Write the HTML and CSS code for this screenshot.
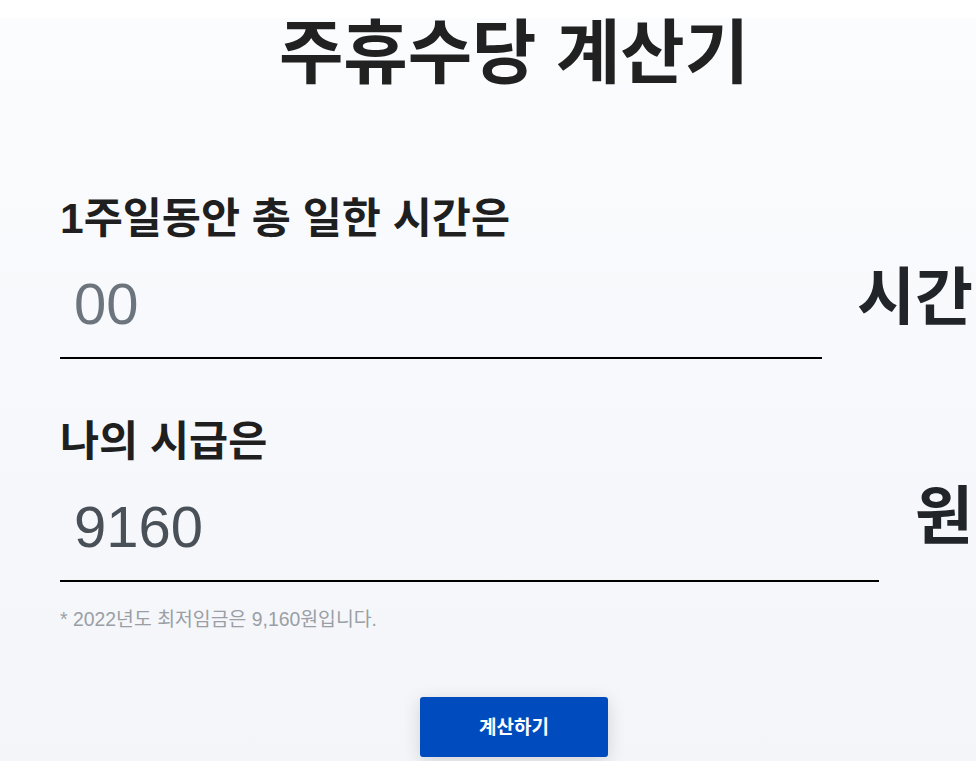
FILE: index.html
```html
<!DOCTYPE html>
<html lang="ko">
<head>
<meta charset="utf-8">
<title>주휴수당 계산기</title>
<link rel="stylesheet" href="styles.css">
</head>
<body>
<main class="page">
  <h1 class="title">주휴수당 계산기</h1>
  <form class="calc">
    <div class="field">
      <label class="field-label" for="hours">1주일동안 총 일한 시간은</label>
      <div class="input-row">
        <input id="hours" class="field-input" type="text" placeholder="00">
        <span class="unit">시간</span>
      </div>
    </div>
    <div class="field field-second">
      <label class="field-label" for="wage">나의 시급은</label>
      <div class="input-row">
        <input id="wage" class="field-input" type="text" value="9160">
        <span class="unit unit-won">원</span>
      </div>
    </div>
    <p class="note">* 2022년도 최저임금은 9,160원입니다.</p>
    <button type="button" class="submit">계산하기</button>
  </form>
</main>
</body>
</html>
```

FILE: styles.css
```css
html, body {
  margin: 0;
  padding: 0;
  background: #ffffff;
}

body {
  font-family: "Liberation Sans", "Noto Sans CJK KR", sans-serif;
  color: #212529;
}

.page {
  margin-top: 18px;
  min-height: 743px;
  box-sizing: border-box;
  padding: 0 8px 0 60px;
  background: linear-gradient(180deg, #fbfcfe 0%, #f3f5f9 100%);
  display: flex;
  flex-direction: column;
}

.title {
  margin: 0;
  font-size: 70px;
  line-height: 72px;
  font-weight: 700;
  text-align: center;
  color: #212121;
}

.calc {
  margin-top: 105px;
  display: flex;
  flex-direction: column;
}

.field {
  display: flex;
  flex-direction: column;
}

.field-second {
  margin-top: 59px;
}

.field-label {
  font-size: 42.5px;
  line-height: 48px;
  font-weight: 700;
  color: #1f1f1f;
  margin-bottom: 6px;
}

.input-row {
  display: flex;
  align-items: center;
}

.field-input {
  flex: 1;
  min-width: 0;
  height: 110px;
  box-sizing: border-box;
  padding: 0 14px;
  border: none;
  border-bottom: 2px solid #000;
  background: transparent;
  font-family: "Liberation Sans", "Noto Sans CJK KR", sans-serif;
  font-size: 58px;
  color: #495057;
  outline: none;
}

.field-input::placeholder {
  color: #6c757d;
  opacity: 1;
}

.unit {
  margin-left: 35px;
  margin-right: -5px;
  margin-bottom: 14px;
  font-size: 63px;
  line-height: 64px;
  font-weight: 700;
  color: #212529;
}

.unit-won {
  margin-left: 36px;
  margin-bottom: 22px;
}

.note {
  margin: 25px 0 0;
  font-size: 19.4px;
  line-height: 24px;
  color: #9a9fa6;
}

.submit {
  align-self: center;
  margin-top: 66px;
  width: 188px;
  height: 60px;
  border: none;
  border-radius: 3px;
  background: #004cbf;
  color: #ffffff;
  font-family: "Liberation Sans", "Noto Sans CJK KR", sans-serif;
  font-size: 19px;
  font-weight: 700;
  padding: 0 0 4px;
  box-shadow: 0 4px 18px rgba(0, 0, 0, 0.14);
  cursor: pointer;
}
```
